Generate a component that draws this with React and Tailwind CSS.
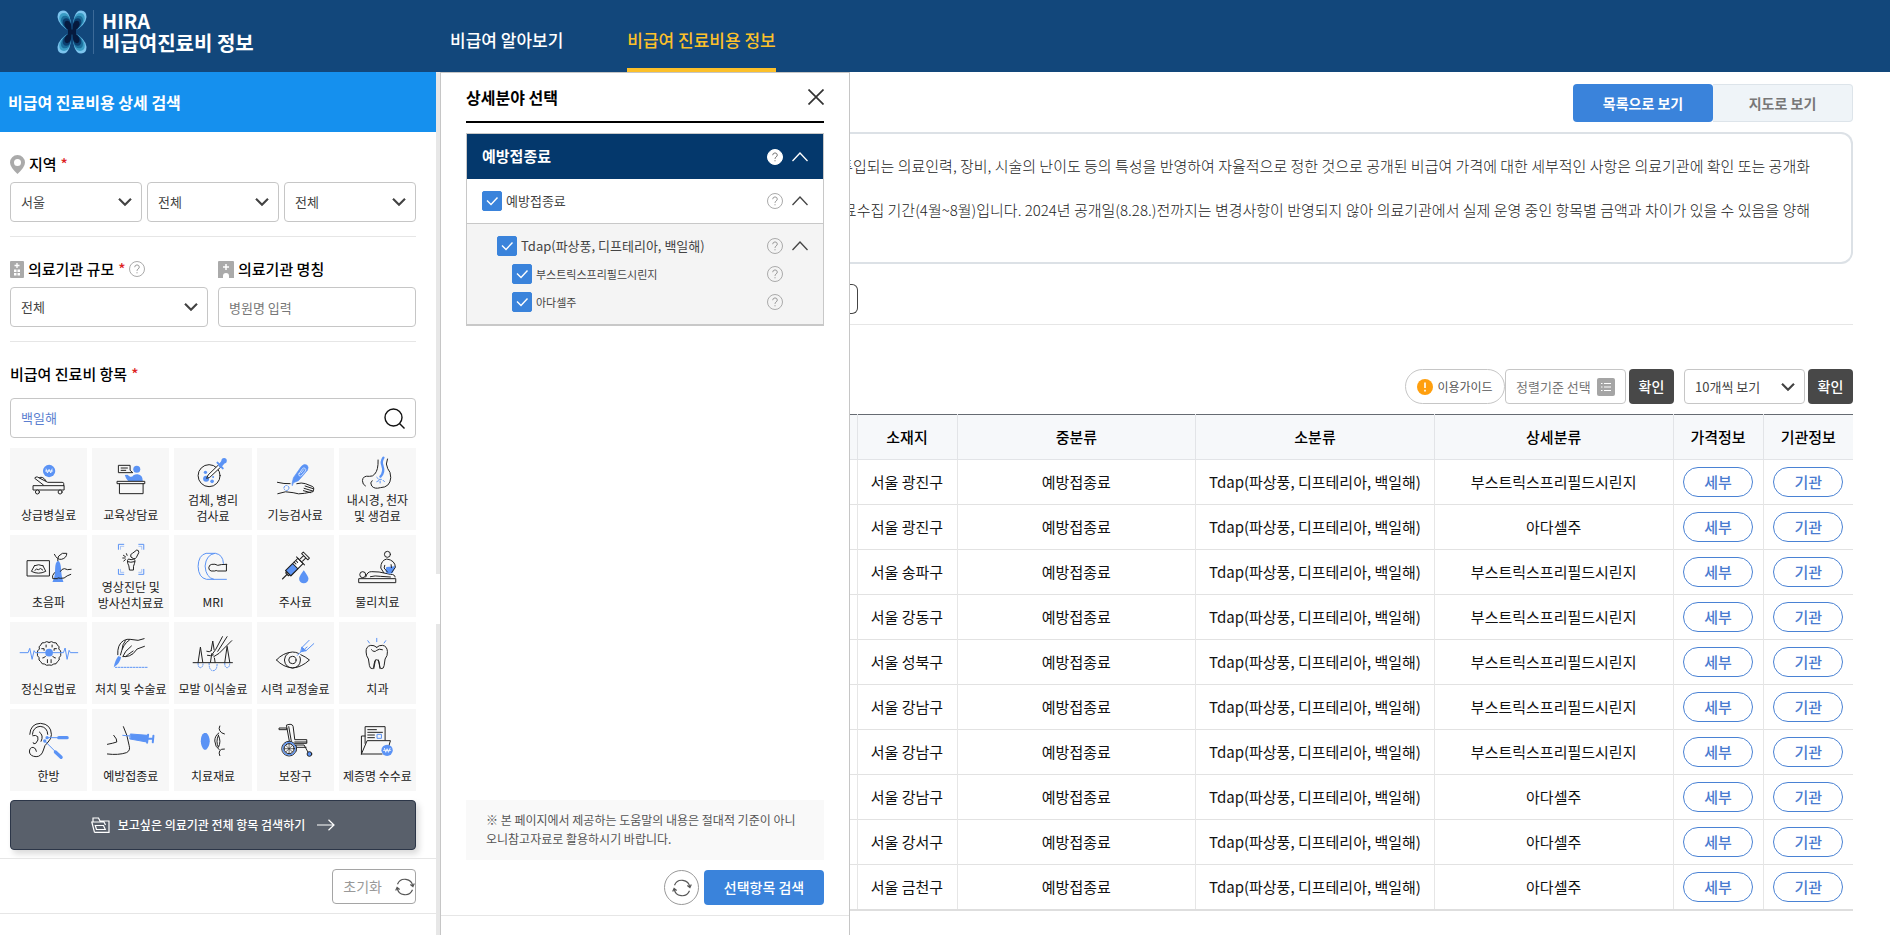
import React from "react";

const B = "#5b93f5";

function Glyph({ box, children }) {
  return (
    <svg
      viewBox={box}
      className="h-11 w-full shrink-0 overflow-visible"
      fill="none"
      stroke="#222"
      strokeWidth="3"
      strokeLinecap="round"
      strokeLinejoin="round"
      aria-hidden="true"
    >
      {children}
    </svg>
  );
}

const CATEGORIES = [
  {
    label: ["상급병실료"],
    icon: (
      <Glyph box="30 24 231 132">
        <circle cx="147" cy="93" r="18.5" fill={B} stroke="none" />
        <path d="M138 87l4 12 5-11 5 11 4-12M136 93h22" stroke="#fff" strokeWidth="2.4" />
        <rect x="100" y="137" width="92" height="13" />
        <circle cx="112" cy="156" r="6" fill="#f7f7f7" />
        <circle cx="180" cy="156" r="6" fill="#f7f7f7" />
        <path d="M191 137v-6q0-4-5-4h-43l-31-16q-6-2-8 4l26 20M118 113q10-6 20 10" />
      </Glyph>
    ),
  },
  {
    label: ["교육상담료"],
    icon: (
      <Glyph box="276 24 231 132">
        <path d="M356 76h34v15l8 7h-42zM363 84h19M363 91h14" />
        <circle cx="410" cy="88" r="10.5" fill={B} stroke="none" />
        <path d="M374 105l8-1 8 6q6 2 10-4 6-4 13-3 15 2 15 20h-44l-6-8z" fill={B} stroke="none" />
        <rect x="352" y="124" width="82" height="7" />
        <path d="M358 131v30h71v-30" />
      </Glyph>
    ),
  },
  {
    label: ["검체, 병리", "검사료"],
    icon: (
      <Glyph box="523 24 231 132">
        <circle cx="628" cy="107" r="33" />
        <circle cx="617" cy="97" r="5" fill={B} stroke="none" />
        <circle cx="619" cy="116" r="9" fill={B} stroke="none" />
        <circle cx="637" cy="124" r="5.5" fill={B} stroke="none" />
        <circle cx="640" cy="111" r="3" fill={B} stroke="none" />
        <path d="M621 114l4-9 32-31 6 7-32 30z" fill="#fff" />
        <path d="M653 68l16 17" stroke={B} strokeWidth="6" />
        <path d="M662 76l10-12" stroke={B} strokeWidth="12" />
        <circle cx="673" cy="62" r="8" fill={B} stroke="none" />
      </Glyph>
    ),
  },
  {
    label: ["기능검사료"],
    icon: (
      <Glyph box="771 24 231 132">
        <path d="M876 130l4-17 24-34q8-9 16-4 7 5 2 16l-27 31-15 6-3 8z" fill={B} stroke={B} strokeWidth="2" />
        <path d="M897 101l10-15q4-4 8-1 4 4 1 8l-11 13q-4 4-8 1-3-2 0-6zM903 99l8-10" stroke="#fff" strokeWidth="2" />
        <path d="M832 127q20 5 38 4M890 131q14-4 26 0l20 8q6 2 5 8l-2 8-26 5q-18 4-34-2-22-7-46 3M915 138l24 8M912 145l26 8M910 152l22 6" />
        <circle cx="859" cy="144" r="7.5" stroke={B} strokeDasharray="4 4" />
      </Glyph>
    ),
  },
  {
    label: ["내시경, 천자", "및 생검료"],
    icon: (
      <Glyph box="1018 24 231 132">
        <path d="M1135 60q1 30-10 42-6 8-16 7-20-3-21 13 0 12 9 16M1117 122q-8 6-1 16 8 10 26 5 29-1 31-30 0-18-9-27-8-13-1-29" />
        <path d="M1151 53q-8 12-3 24 7 20-6 33" stroke={B} strokeWidth="7" />
        <path d="M1131 112l5 5M1131 125l6-3M1141 129v-6M1150 121l4 4M1139 118h6" stroke={B} strokeWidth="3" />
      </Glyph>
    ),
  },
  {
    label: ["초음파"],
    icon: (
      <Glyph box="30 285 231 132">
        <rect x="82" y="362" width="66" height="46" />
        <path d="M103 377q13-6 25 0M103 377l-9 17q21 11 43 0l-9-18M104 391q5-7 11-2 6-8 13 1" />
        <path d="M157 426q8-14 8-38 0-22 9-26 8 4 9 26 1 24 7 38z" fill={B} stroke="none" />
        <path d="M163 343q8 17 21 15 16-4 16-18-14-4-24 8-4 6-3 14M213 388q-12 3-20-2-8 0-12 8M212 403q-12 4-20 11-12 2-18 0M163 398q-9 10-5 18h14" />
      </Glyph>
    ),
  },
  {
    label: ["영상진단 및", "방사선치료료"],
    icon: (
      <Glyph box="276 285 231 132">
        <g stroke={B}>
          <path d="M355 328v-15h16M416 313h15v15M431 388v15h-15M371 403h-16v-15" />
          <path d="M361 328v-9h10M416 319h9v9M425 388v9h-9M371 397h-10v-9" strokeWidth="1.5" />
        </g>
        <path d="M388 389q-1-14-5-19-3-9 2-13 8 4 16 0 7 4 2 14-4 6-3 18zM392 350q-3-8 5-10l13-10q7 0 6 8l-7 14q-2 6-8 4zM370 346l6 4M368 354h7M371 363l5-4M379 341l2 5M383 365q8 4 20 0" />
      </Glyph>
    ),
  },
  {
    label: ["MRI"],
    icon: (
      <Glyph box="523 285 231 132">
        <path d="M680 418h-60q-24-5-25-39 1-34 24-39h28q23 4 24 30" stroke={B} />
        <path d="M645 340q-26 4-29 38 2 35 26 40" stroke={B} />
        <path d="M680 373v20h-26q-5-3-9 0h-11q-7-2-7-10 1-9 9-10 10-2 18 3 8-3 26-3z" fill="#f7f7f7" />
      </Glyph>
    ),
  },
  {
    label: ["주사료"],
    icon: (
      <Glyph box="771 285 231 132">
        <g transform="translate(887 377) rotate(-45)">
          <path d="M-56 0h20" strokeWidth="4" />
          <rect x="-32" y="-11" width="52" height="22" fill="#fff" />
          <rect x="-32" y="-11" width="30" height="22" fill={B} />
          <path d="M-32-6h-5v12h5M20-17v34M24-5h14v10h-14M38-13h7v26h-7zM4-11v8M11-11v8" />
        </g>
        <path d="M911 391q14 19 14 25a14 14 0 0 1-28 0q0-7 14-25z" fill={B} stroke="none" />
      </Glyph>
    ),
  },
  {
    label: ["물리치료"],
    icon: (
      <Glyph box="1018 285 231 132">
        <rect x="1078" y="416" width="110" height="12" />
        <circle cx="1089" cy="404" r="9" />
        <path d="M1098 411q4-17 18-16l22 1 34 7q14 0 14 8M1112 410q14-4 30-1l30 2" />
        <path d="M1160 381l27-2-8 20q-10 4-18 1-6-6-1-19z" fill={B} stroke="none" />
        <circle cx="1163" cy="343" r="9" />
        <path d="M1152 398l-9-14q0-23 18-27 25 4 26 25l-11 15M1155 376l-2 8 10 12M1174 374l1 9" />
      </Glyph>
    ),
  },
  {
    label: ["정신요법료"],
    icon: (
      <Glyph box="30 36 231 132">
        <path
          d="M147 97q-8-5-14 1-9-2-11 7-8 5-4 12-8 5-6 13-2 8 5 13-3 8 5 12 3 9 11 7 6 6 14 3 8 3 14-3 8 2 11-7 8-4 5-12 7-5 5-13 2-8-6-13 4-7-4-12-2-9-11-7-6-6-14-1z"
          fill="#f7f7f7"
        />
        <path d="M60 128h24l5-13 7 33 6-26 4 6h84l5-14 6 34 6-27 4 7h22" stroke={B} />
        <circle cx="147" cy="128" r="11.5" fill={B} stroke="none" />
        <path d="M138 105v6M156 105v6M125 116h7v5M169 116h-7v5M128 144q6 0 8-5M166 144q-6 0-8-5M142 158v-9M153 158v-9" />
      </Glyph>
    ),
  },
  {
    label: ["처치 및 수술료"],
    icon: (
      <Glyph box="276 36 231 132">
        <path d="M353 134q-2-30 17-42 12-6 20-4l24 3 18-5M433 109l-22 8-12 14q-10 8-22 9M388 90q-20 12-27 45M394 108l-17 16-9 16q10 2 17-7l14-10M376 92q-10 12-10 25" />
        <path d="M341 172q4-22 14-34l8 4q-4 20-22 30z" fill={B} stroke="none" />
        <path d="M346 172h98" stroke={B} strokeDasharray="5 4" />
      </Glyph>
    ),
  },
  {
    label: ["모발 이식술료"],
    icon: (
      <Glyph box="523 36 231 132">
        <g stroke={B} strokeDasharray="3 4">
          <path d="M595 160q0 13 7 13t8-13M628 160q0 22 12 22t12-22M675 160q0 13 7 13t8-13" />
        </g>
        <path d="M580 158h118" />
        <path d="M595 157l7-46 7 46M675 157l7-48 8 48M632 157l4-26M646 157l-2-13M634 122l5-29 4 26M668 80l-20 38-13 18M682 80l-28 44M696 92l-38 38-16 10M621 124q8 4 14-2M623 136q10 3 18-1" />
      </Glyph>
    ),
  },
  {
    label: ["시력 교정술료"],
    icon: (
      <Glyph box="771 36 231 132">
        <path d="M829 150q20-22 48-24 10 0 18 4M902 134q14 6 26 16-24 22-50 24-28-2-49-24M865 129q-12 8-12 21 2 22 24 24 23-2 24-24 0-6-2-10" />
        <circle cx="877" cy="150" r="11" />
        <path d="M906 112l12 10-15 3z" fill={B} stroke={B} />
        <path d="M892 136l12-12M906 112l21-21M918 122l23-21M915 116l6-5" stroke={B} />
      </Glyph>
    ),
  },
  {
    label: ["치과"],
    icon: (
      <Glyph box="1018 36 231 132">
        <path d="M1131 112q-8-7-18-6-15 3-14 20 0 12 7 21l3 20q2 10 9 9 5-2 5-14 1-13 8-13t8 13q0 12 5 14 8 1 9-9l3-20q8-10 7-22-1-17-15-19-10-1-17 6M1115 119q8 10 16 2 7-6 17-2M1122 176l5-26M1141 176l-5-26" />
        <path d="M1104 92l5 7M1131 85v10M1158 92l-5 7" stroke={B} />
      </Glyph>
    ),
  },
  {
    label: ["한방"],
    icon: (
      <Glyph box="30 297 231 132">
        <path d="M89 373q2-32 32-33 32 2 33 34-1 14-10 22-12 10-14 24-6 20-22 20-18-1-20-14 0-14 11-14 9 2 10 12M97 373q2-22 23-24 22 2 23 24M98 377q9-3 15 3 4 10-6 20-8 4-8-2M118 366q14 10 5 28" />
        <path d="M142 383h30M134 393l30 30" stroke={B} />
        <path d="M176 383h25M166 426l17 16" stroke={B} strokeWidth="10" />
        <circle cx="141" cy="383" r="5" fill={B} stroke="none" />
        <circle cx="134" cy="393" r="5" fill={B} stroke="none" />
      </Glyph>
    ),
  },
  {
    label: ["예방접종료"],
    icon: (
      <Glyph box="276 297 231 132">
        <path d="M370 350q12 24 17 56 5 16-8 22-24 8-57 4M322 403q16-3 28-7 2-8-9-20" />
        <path d="M368 376l22 2" stroke={B} />
        <path d="M392 372l50 4-2 20-50-9z" fill={B} stroke={B} />
        <path d="M444 374l-3 24M460 377l-2 20" stroke={B} strokeWidth="6" />
        <path d="M444 386h14" stroke={B} strokeWidth="6" />
      </Glyph>
    ),
  },
  {
    label: ["치료재료"],
    icon: (
      <Glyph box="523 297 231 132">
        <path d="M613 369q-10 6-10 25 1 18 10 25h6q10-8 11-25-1-18-10-25z" fill={B} stroke="none" />
        <path d="M660 348q-4 8 0 14 4 8 14 10M660 437q-4-8 0-15 4-6 14-5M657 369q-12 8-12 24 1 18 13 26M656 376q9 18 0 36-9-18 0-36z" />
      </Glyph>
    ),
  },
  {
    label: ["보장구"],
    icon: (
      <Glyph box="771 297 231 132">
        <path d="M860 345q16-6 19 4l5 40h36v11h-50zM838 354h22v5h-22zM884 396h36M866 350l8 46M890 405h22l12 22M884 412h34M888 405v18" />
        <circle cx="867" cy="416" r="22" fill="#f7f7f7" strokeWidth="3" />
        <circle cx="867" cy="416" r="18.5" stroke={B} strokeWidth="4" />
        <circle cx="867" cy="416" r="15" />
        <path d="M867 401v30M852 416h30M857 406l20 20M877 406l-20 20" strokeWidth="2" />
        <circle cx="928" cy="432" r="7" fill={B} />
      </Glyph>
    ),
  },
  {
    label: ["제증명 수수료"],
    icon: (
      <Glyph box="1018 297 231 132">
        <path d="M1085 432v-54h11M1096 400v-50h60v40M1104 359h26M1104 367h44M1104 375h20M1104 383h20M1085 432h62M1085 432l17-40h70l-5 17" />
        <rect x="1133" y="373" width="12" height="12" stroke={B} />
        <circle cx="1162" cy="421" r="17" fill={B} stroke="none" />
        <path d="M1154 415l4 12 4-11 4 11 5-12M1151 421h22" stroke="#fff" strokeWidth="2.4" />
      </Glyph>
    ),
  },
];

const ROWS = [
  ["서울 광진구", "부스트릭스프리필드시린지"],
  ["서울 광진구", "아다셀주"],
  ["서울 송파구", "부스트릭스프리필드시린지"],
  ["서울 강동구", "부스트릭스프리필드시린지"],
  ["서울 성북구", "부스트릭스프리필드시린지"],
  ["서울 강남구", "부스트릭스프리필드시린지"],
  ["서울 강남구", "부스트릭스프리필드시린지"],
  ["서울 강남구", "아다셀주"],
  ["서울 강서구", "아다셀주"],
  ["서울 금천구", "아다셀주"],
];

function SelectBox({ label, value, className = "" }) {
  return (
    <div className={`relative min-w-0 ${className}`}>
      <select
        aria-label={label}
        className="h-full w-full appearance-none rounded border border-[#c6c6c6] bg-white pr-8 pl-2.5 text-[13px] text-[#444]"
      >
        <option>{value}</option>
      </select>
      <svg viewBox="0 0 14 9" className="pointer-events-none absolute top-1/2 right-2.5 h-[9px] w-3.5 -translate-y-1/2" fill="none" stroke="#444" strokeWidth="2.2" aria-hidden="true">
        <path d="M1 1.2l6 6 6-6" />
      </svg>
    </div>
  );
}

function HelpButton({ filled = false }) {
  return (
    <button type="button" aria-label="도움말" className="size-4 shrink-0">
      <svg viewBox="0 0 16 16" className="size-4" fill={filled ? "#fff" : "none"} stroke={filled ? "#fff" : "#aaa"} aria-hidden="true">
        <circle cx="8" cy="8" r="7.5" />
        <path d="M5.7 6.2q.1-2.2 2.3-2.3 2.2.1 2.3 2.1 0 1.3-1.3 2Q8 8.7 8 9.9M8 11.2v1.1" fill="none" stroke={filled ? "#777" : "#999"} />
      </svg>
    </button>
  );
}

function Collapse({ color = "#444" }) {
  return (
    <button type="button" aria-label="접기" className="h-4 w-4 shrink-0">
      <svg viewBox="0 0 16 16" className="size-4" fill="none" stroke={color} strokeWidth="1.3" aria-hidden="true">
        <path d="M.5 12L8 4l7.5 8" />
      </svg>
    </button>
  );
}

function Check({ children }) {
  return (
    <label className="flex flex-1 items-center gap-1">
      <span className="grid size-5 shrink-0 place-items-center">
        <input type="checkbox" defaultChecked className="peer col-start-1 row-start-1 size-5 appearance-none rounded-[2px] border border-[#3a83db] bg-white checked:bg-[#3a83db]" />
        <svg viewBox="0 0 20 20" className="pointer-events-none invisible col-start-1 row-start-1 size-5 peer-checked:visible" fill="none" stroke="#fff" strokeWidth="1.4" aria-hidden="true">
          <path d="M5 9.5l4 4 6.5-7" />
        </svg>
      </span>
      {children}
    </label>
  );
}

function Refresh() {
  return (
    <svg viewBox="0 0 20 20" className="size-5 shrink-0" fill="none" stroke="#555" strokeWidth="1.2" aria-hidden="true">
      <path d="M2.5 7.2A8 8 0 0 1 17.8 9.2M17.5 12.8A8 8 0 0 1 2.2 10.8M15.3 7.6l2.6 2 1.4-3.2M4.7 12.4l-2.6-2-1.4 3.2" />
    </svg>
  );
}

function Wing({ scale, fill }) {
  return (
    <g fill={fill} transform={`translate(15 22) scale(${scale}) translate(-15 -22)`}>
      <path d="M14 22Q1 15 .5 7 .5 .5 6 .5 14.5 .5 14 22z" />
      <path d="M16 22Q29 15 29.5 7 29.5 .5 24 .5 15.5 .5 16 22z" />
      <path d="M14 22Q1 29 .5 37 .5 43.5 6 43.5 14.5 43.5 14 22z" />
      <path d="M16 22Q29 29 29.5 37 29.5 43.5 24 43.5 15.5 43.5 16 22z" />
    </g>
  );
}

function Logo() {
  return (
    <svg viewBox="0 0 30 44" className="h-11 w-[30px] shrink-0" aria-hidden="true">
      <Wing scale={1} fill="#7cc4ee" />
      <Wing scale={0.88} fill="#3a9cc4" />
      <Wing scale={0.76} fill="#1c6e9c" />
      <Wing scale={0.64} fill="#0b3f70" />
      <Wing scale={0.52} fill="#061a3e" />
      <path d="M11 16l4 4 4-4v12l-4-4-4 4z" fill="#061a3e" />
    </svg>
  );
}

function Header() {
  return (
    <header className="flex h-[72px] shrink-0 bg-[#12477b] text-white">
      <a href="#home" className="flex w-[450px] shrink-0 items-center pb-2 pl-[57px]">
        <Logo />
        <span className="ml-1.5 h-11 w-px bg-[#3c6a98]" />
        <span className="ml-2 flex flex-col text-[20px] leading-[22px] font-bold whitespace-nowrap">
          <span>HIRA</span>
          <span>비급여진료비 정보</span>
        </span>
      </a>
      <nav className="flex gap-16 text-[17px] font-medium whitespace-nowrap">
        <a href="#about" className="flex items-center border-b-4 border-transparent pt-3">비급여 알아보기</a>
        <a href="#cost" className="flex items-center border-b-4 border-[#fcc02a] pt-3 text-[#fcc02a]">비급여 진료비용 정보</a>
      </nav>
    </header>
  );
}

function SearchPanel() {
  const label = "flex items-center gap-1 text-[15px] leading-5 font-medium text-black";
  const field = "rounded border border-[#c6c6c6] bg-white text-[13px]";
  return (
    <aside className="flex w-[440px] shrink-0">
      <form className="flex min-w-0 flex-1 flex-col" onSubmit={(e) => e.preventDefault()}>
        <h2 className="flex h-[60px] items-center bg-[#1590ee] pl-2 text-[16px] font-bold text-white">비급여 진료비용 상세 검색</h2>
        <div className="pr-5 pl-2.5">
          <div className="border-b border-[#e6e6e6] pt-[22px] pb-3.5">
            <div className={label}>
              <svg viewBox="0 0 15 19" className="h-[19px] w-[15px]" aria-hidden="true">
                <path fillRule="evenodd" fill="#aaa" d="M7.5 0A7.5 7.5 0 0 0 0 7.5Q0 12 7.5 19 15 12 15 7.5A7.5 7.5 0 0 0 7.5 0zm0 4a3.5 3.5 0 1 1 0 7 3.5 3.5 0 0 1 0-7z" />
              </svg>
              지역 <span className="text-[#d22]">*</span>
            </div>
            <div className="mt-2 grid h-10 grid-cols-3 gap-[5px]">
              <SelectBox label="시도" value="서울" />
              <SelectBox label="시군구" value="전체" />
              <SelectBox label="읍면동" value="전체" />
            </div>
          </div>
          <div className="grid grid-cols-2 gap-2.5 border-b border-[#e6e6e6] pt-[22px] pb-3.5">
            <div>
              <div className={label}>
                <svg viewBox="0 0 14 17" className="h-[17px] w-3.5" aria-hidden="true">
                  <rect width="14" height="17" rx="1" fill="#aaa" />
                  <path d="M7 2v5M4.5 4.5h5" stroke="#fff" strokeWidth="1.3" />
                  <path d="M4 8.5h2.5V11H4zM7.5 8.5H10V11H7.5zM4 12h2.5v2.5H4zM7.5 12H10v2.5H7.5z" fill="#fff" />
                </svg>
                의료기관 규모 <span className="text-[#d22]">*</span>
                <HelpButton />
              </div>
              <SelectBox label="의료기관 규모" value="전체" className="mt-2 h-10" />
            </div>
            <div>
              <label htmlFor="hospital" className={label}>
                <svg viewBox="0 0 16 17" className="h-[17px] w-4" aria-hidden="true">
                  <path d="M0 1q0-1 1-1h14q1 0 1 1v16h-5v-2a3 3 0 0 0-6 0v2H0z" fill="#aaa" />
                  <path d="M8 3v6M5 6h6" stroke="#fff" strokeWidth="1.5" />
                </svg>
                의료기관 명칭
              </label>
              <input id="hospital" type="text" placeholder="병원명 입력" className={`${field} mt-2 h-10 w-full px-2.5 placeholder:text-[#777]`} />
            </div>
          </div>
          <label htmlFor="item" className={`${label} pt-[22px]`}>
            비급여 진료비 항목 <span className="text-[#d22]">*</span>
          </label>
          <div className={`${field} mt-3.5 flex h-10 items-center pr-2.5`}>
            <input id="item" type="text" defaultValue="백일해" className="min-w-0 flex-1 pl-2.5 text-[#5c7fd0] outline-none" />
            <button type="submit" aria-label="검색">
              <svg viewBox="0 0 21 21" className="size-[21px]" fill="none" stroke="#111" strokeWidth="1.4" aria-hidden="true">
                <circle cx="9.5" cy="9.5" r="8.5" />
                <path d="M15.5 15.5l5 5" />
              </svg>
            </button>
          </div>
          <div className="mt-2.5 grid grid-cols-5 gap-[5px]">
            {CATEGORIES.map((c) => (
              <button key={c.label[0]} type="button" className="flex h-[82px] flex-col items-center bg-[#f7f7f7] pb-[7px] text-[12px] leading-4 whitespace-nowrap text-[#222]">
                {c.icon}
                <span className="flex flex-1 flex-col justify-end">
                  {c.label.map((line) => (
                    <span key={line}>{line}</span>
                  ))}
                </span>
              </button>
            ))}
          </div>
          <button type="button" className="mt-[9px] flex h-[50px] w-full items-center justify-center rounded border border-[#2c3648] bg-[#59606b] text-[12px] font-medium text-white shadow-[3px_4px_6px_rgba(0,0,0,0.15)]">
            <svg viewBox="0 0 19 16" className="mr-2 h-4 w-[19px]" fill="none" stroke="#fff" strokeWidth="1.2" aria-hidden="true">
              <path d="M3.5 15.3H18V4H9L7.5 1H2v3.5M3.5 15.3L.8 5H13l1.5 3M5.5 12.5l-1.2-4h8.2l1.8 4z" />
            </svg>
            보고싶은 의료기관 전체 항목 검색하기
            <svg viewBox="0 0 18 12" className="ml-3 h-3 w-[18px]" fill="none" stroke="#fff" strokeWidth="1.2" aria-hidden="true">
              <path d="M0 6h17M11.5 .8L17 6l-5.5 5.2" />
            </svg>
          </button>
        </div>
        <div className="mt-2 flex justify-end border-y border-[#e6e6e6] pt-2.5 pr-5 pb-[9px]">
          <button type="reset" className="flex h-[35px] items-center gap-[13px] rounded border border-[#a5a5a5] pl-2.5 text-[14px] text-[#999]">
            초기화
            <Refresh />
          </button>
        </div>
      </form>
      <div className="flex w-1 items-start bg-[#e7e7e7] pt-[502px]">
        <span className="h-[50px] w-full bg-white" />
      </div>
    </aside>
  );
}

function DetailPanel() {
  return (
    <section className="flex w-[410px] shrink-0 flex-col border border-b-0 border-[#c6c6c6] bg-white">
      <div className="flex flex-1 flex-col px-[25px]">
        <div className="flex h-[50px] items-center justify-between border-b-2 border-black">
          <h3 className="text-[16px] font-bold text-black">상세분야 선택</h3>
          <button type="button" aria-label="닫기">
            <svg viewBox="0 0 16 16" className="size-4" stroke="#333" strokeWidth="1.7" aria-hidden="true">
              <path d="M.5 .5l15 15M15.5 .5l-15 15" />
            </svg>
          </button>
        </div>
        <div className="mt-2.5 border border-b-2 border-[#c8c8c8] text-[13px] text-[#444]">
          <div className="flex h-[45px] items-center gap-[9px] bg-[#04386c] px-[15px] text-[15px] font-bold text-white">
            <span className="flex-1">예방접종료</span>
            <HelpButton filled />
            <Collapse color="#fff" />
          </div>
          <div className="flex h-[45px] items-center gap-[9px] border-b border-[#c8c8c8] px-[15px]">
            <Check>예방접종료</Check>
            <HelpButton />
            <Collapse />
          </div>
          <ul className="flex flex-col gap-2 bg-[#f4f4f4] py-3 pr-[15px] pl-[30px]">
            <li className="flex items-center gap-[9px]">
              <Check>Tdap(파상풍, 디프테리아, 백일해)</Check>
              <HelpButton />
              <Collapse />
            </li>
            {["부스트릭스프리필드시린지", "아다셀주"].map((t) => (
              <li key={t} className="flex items-center pr-[25px] pl-[15px] text-[11px]">
                <Check>{t}</Check>
                <HelpButton />
              </li>
            ))}
          </ul>
        </div>
        <p className="mt-auto flex flex-col bg-[#f9f9f9] px-5 pt-2.5 pb-3 text-[12px] leading-[19px] whitespace-nowrap text-[#555]">
          <span>※ 본 페이지에서 제공하는 도움말의 내용은 절대적 기준이 아니</span>
          <span>오니참고자료로 활용하시기 바랍니다.</span>
        </p>
        <div className="mt-2.5 mb-2.5 flex justify-end gap-[5px]">
          <button type="button" aria-label="선택 초기화" className="grid size-[35px] place-items-center rounded-full border border-[#999]">
            <Refresh />
          </button>
          <button type="button" className="h-[35px] w-[120px] rounded bg-[#3a83db] text-[14px] font-medium text-white">선택항목 검색</button>
        </div>
      </div>
      <div className="h-5 border-t border-[#e6e6e6]" />
    </section>
  );
}

function ResultTable() {
  const th = "border-l border-[#e2e4e7] font-medium";
  const td = "border-l border-[#e6e6e6]";
  const pill = "h-[30px] w-[70px] rounded-full border border-[#4a82d4] bg-white text-[15px] leading-7 font-medium text-[#4a7bd0]";
  return (
    <table className="mt-2.5 w-full table-fixed border-b-2 border-[#dedede] text-center text-[15px] whitespace-nowrap text-[#111]">
      <colgroup>
        <col className="w-[7px]" />
        <col className="w-[100px]" />
        <col />
        <col />
        <col />
        <col className="w-[90px]" />
        <col className="w-[90px]" />
      </colgroup>
      <thead>
        <tr className="h-[45px] border-t border-b border-t-[#666b72] border-b-[#e2e4e7] bg-[#f6f8fa] text-black">
          <td />
          {["소재지", "중분류", "소분류", "상세분류", "가격정보", "기관정보"].map((h) => (
            <th key={h} scope="col" className={th}>{h}</th>
          ))}
        </tr>
      </thead>
      <tbody>
        {ROWS.map(([place, detail], i) => (
          <tr key={i} className="h-[45px] border-b border-[#e2e2e2]">
            <td />
            <td className={td}>{place}</td>
            <td className={td}>예방접종료</td>
            <td className={td}>Tdap(파상풍, 디프테리아, 백일해)</td>
            <td className={td}>{detail}</td>
            <td className={td}><button type="button" className={pill}>세부</button></td>
            <td className={td}><button type="button" className={pill}>기관</button></td>
          </tr>
        ))}
      </tbody>
    </table>
  );
}

function Results() {
  const ok = "h-[35px] w-[45px] rounded bg-[#484848] text-[14px] font-medium text-white";
  return (
    <main className="min-w-0 flex-1 overflow-hidden pt-3 pr-[37px]">
      <div className="flex h-[38px] justify-end text-[14px] font-bold">
        <button type="button" className="w-[140px] rounded bg-[#3a83db] text-white">목록으로 보기</button>
        <button type="button" className="w-[140px] rounded-r border border-l-0 border-[#dde4ea] bg-[#eff4f8] text-[#777]">지도로 보기</button>
      </div>
      <div className="mt-2.5 flex h-[132px] flex-col overflow-hidden rounded-r-xl border-2 border-l-0 border-[#dce1e6] pt-2.5 pr-[41px] text-[15px] leading-[44px] font-light whitespace-nowrap text-[#222]">
        <p className="flex justify-end overflow-hidden">
          투입되는 의료인력, 장비, 시술의 난이도 등의 특성을 반영하여 자율적으로 정한 것으로 공개된 비급여 가격에 대한 세부적인 사항은 의료기관에 확인 또는 공개화
        </p>
        <p className="flex justify-end overflow-hidden">
          료수집 기간(4월~8월)입니다. 2024년 공개일(8.28.)전까지는 변경사항이 반영되지 않아 의료기관에서 실제 운영 중인 항목별 금액과 차이가 있을 수 있음을 양해
        </p>
      </div>
      <div className="flex border-b border-[#e6e6e6] pt-5 pb-2.5">
        <div className="h-[30px] w-2 rounded-r-md border border-l-0 border-[#444]" />
      </div>
      <div className="mt-11 flex h-[35px] justify-end">
        <button type="button" className="flex w-[100px] items-center justify-center gap-1 rounded-full border border-[#c6c6c6] text-[12px] text-[#555]">
          <svg viewBox="0 0 16 16" className="size-4" aria-hidden="true">
            <circle cx="8" cy="8" r="8" fill="#ff9f0e" />
            <path d="M8 3.5v5.5M8 10.8v1.7" stroke="#fff" strokeWidth="1.6" />
          </svg>
          이용가이드
        </button>
        <button type="button" className="flex w-[121px] items-center justify-between rounded border border-[#c6c6c6] px-2.5 text-[13px] text-[#777]">
          정렬기준 선택
          <svg viewBox="0 0 18 18" className="size-[18px]" aria-hidden="true">
            <rect width="18" height="18" rx="2" fill="#a5a5a5" />
            <path d="M7 5.5h7M7 9h7M7 12.5h7M4 5.5h1.5M4 9h1.5M4 12.5h1.5" stroke="#fff" strokeWidth="1.2" />
          </svg>
        </button>
        <button type="button" className={`${ok} ml-[3px]`}>확인</button>
        <SelectBox label="보기 개수" value="10개씩 보기" className="ml-2.5 w-[121px]" />
        <button type="button" className={`${ok} ml-[3px]`}>확인</button>
      </div>
      <ResultTable />
    </main>
  );
}

export default function App() {
  return (
    <div className="flex min-h-screen flex-col bg-white font-['Noto_Sans_CJK_KR','Noto_Sans',sans-serif]">
      <Header />
      <div className="flex flex-1">
        <SearchPanel />
        <DetailPanel />
        <Results />
      </div>
    </div>
  );
}
